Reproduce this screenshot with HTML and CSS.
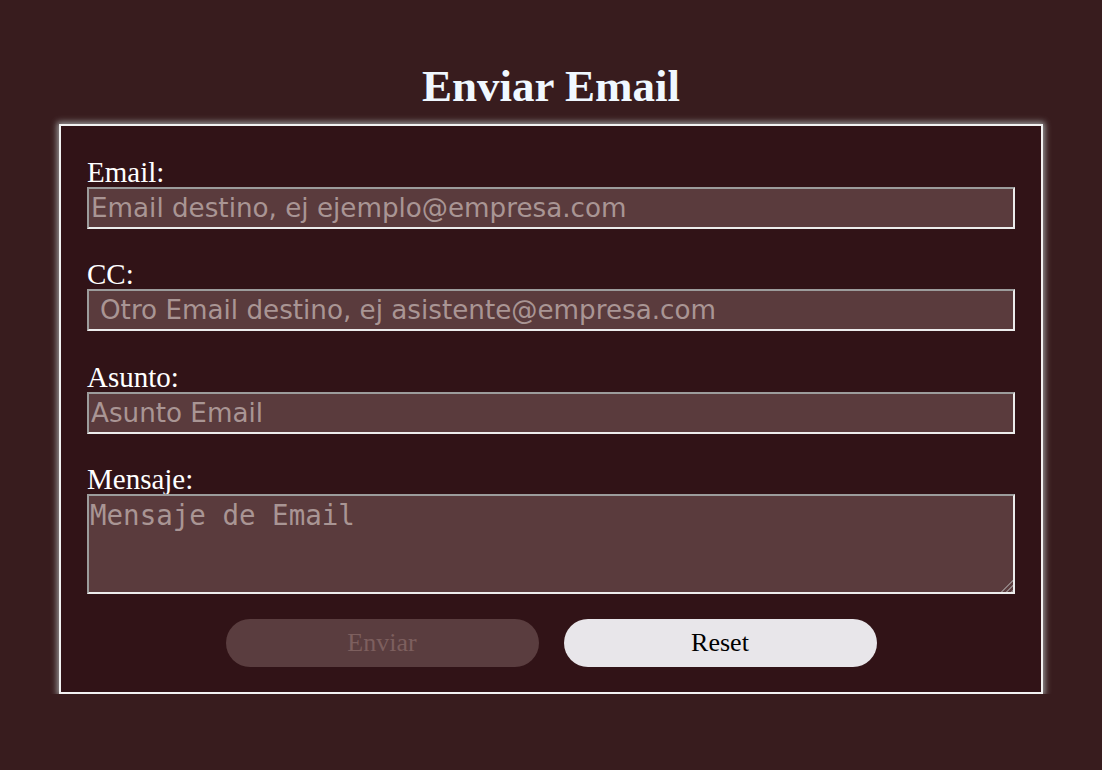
FILE: index.html
```html
<!DOCTYPE html>
<html lang="es">
<head>
<meta charset="utf-8">
<title>Enviar Email</title>
<link rel="stylesheet" href="styles.css">
</head>
<body>
<main class="page">
  <h1 class="title">Enviar Email</h1>
  <form class="mail-form">
    <div class="field">
      <label class="label" for="email">Email:</label>
      <input class="input" id="email" type="text" placeholder="Email destino, ej ejemplo@empresa.com">
    </div>
    <div class="field">
      <label class="label" for="cc">CC:</label>
      <input class="input input-cc" id="cc" type="text" placeholder="Otro Email destino, ej asistente@empresa.com">
    </div>
    <div class="field">
      <label class="label" for="asunto">Asunto:</label>
      <input class="input" id="asunto" type="text" placeholder="Asunto Email">
    </div>
    <div class="field">
      <label class="label" for="mensaje">Mensaje:</label>
      <textarea class="textarea" id="mensaje" placeholder="Mensaje de Email"></textarea>
    </div>
    <div class="actions">
      <button class="btn btn-send" type="submit" disabled>Enviar</button>
      <button class="btn btn-reset" type="reset">Reset</button>
    </div>
  </form>
</main>
</body>
</html>
```
FILE: styles.css
```css
html, body {
  margin: 0;
  padding: 0;
  background: #381c1e;
}
body {
  font-family: "Liberation Serif", "Times New Roman", serif;
  color: #ffffff;
}
.page {
  padding-top: 61px;
  display: flex;
  flex-direction: column;
  align-items: center;
}
.title {
  margin: 0 0 12px;
  font-size: 45px;
  line-height: 51px;
  font-weight: bold;
  color: #f0f8ff;
}
.mail-form {
  width: 984px;
  box-sizing: border-box;
  padding: 26px 26px 25px 26px;
  background: #311317;
  border: 2px solid #f2f2f2;
  box-shadow: 0 0 6px 2px #9a9a9a;
  display: flex;
  flex-direction: column;
  gap: 25.3px;
}
.field {
  display: flex;
  flex-direction: column;
}
.label {
  font-size: 29px;
  line-height: 29px;
  padding-top: 6px;
  color: #ffffff;
}
.input, .textarea {
  width: 928px;
  box-sizing: border-box;
  margin: 0;
  background: #5a3b3d;
  border: 2px solid;
  border-color: #9c9c9c #ececec #ececec #9c9c9c;
  color: #ffffff;
  outline: none;
}
.input {
  height: 42px;
  padding: 1px 2px;
  font-family: "DejaVu Sans", Verdana, sans-serif;
  font-size: 26.2px;
}
.input-cc {
  padding-left: 11px;
}
.textarea {
  height: 100px;
  padding: 4px 1px;
  font-family: "DejaVu Sans Mono", monospace;
  font-size: 27.5px;
  line-height: 30px;
  resize: vertical;
}
.textarea::-webkit-scrollbar {
  width: 18px;
  height: 18px;
}
.textarea::-webkit-resizer {
  background:
    linear-gradient(135deg, #5a3b3d 52%, transparent 52%),
    repeating-linear-gradient(135deg, #5a3b3d 0 2px, #8e7f80 2px 3.5px);
}
.input::placeholder, .textarea::placeholder {
  color: #a99594;
  opacity: 1;
}
.actions {
  display: flex;
  justify-content: center;
  gap: 25px;
}
.btn {
  width: 313px;
  height: 48px;
  border: none;
  border-radius: 24px;
  font-family: "Liberation Serif", "Times New Roman", serif;
  font-size: 26px;
  padding: 0;
}
.btn-send {
  background: #5a3d3f;
  color: #7d5f5e;
}
.btn-reset {
  background: #e8e6ea;
  color: #000000;
}
```
